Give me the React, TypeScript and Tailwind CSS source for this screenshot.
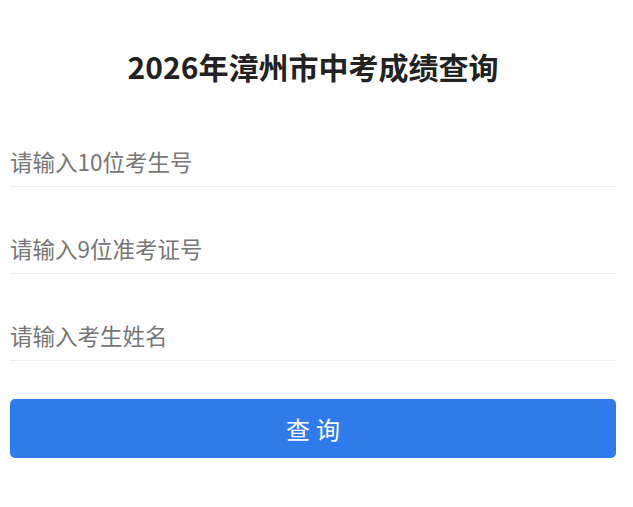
export default function App() {
  const fields = ["请输入10位考生号", "请输入9位准考证号", "请输入考生姓名"];
  return (
    <div
      className="min-h-screen bg-white pl-[10px] pr-[17px]"
      style={{ fontFamily: '"Noto Sans CJK SC", "Noto Sans", sans-serif' }}
    >
      <h1 className="pt-[46px] text-center text-[30px] font-bold leading-[40px] text-[#222222]">
        2026年漳州市中考成绩查询
      </h1>
      <form className="mt-[50px] flex flex-col gap-[36px]">
        {fields.map((p) => (
          <input
            key={p}
            type="text"
            placeholder={p}
            className="h-[51px] w-full border-b border-[#eeeeee] bg-transparent p-0 text-[22.5px] text-[#333333] outline-none placeholder:text-[#777777]"
          />
        ))}
        <button
          type="button"
          className="mt-[2px] h-[59px] w-full rounded-[5px] bg-[#307bec] pl-[6px] text-[24px] tracking-[6px] text-white"
        >
          查询
        </button>
      </form>
    </div>
  );
}
